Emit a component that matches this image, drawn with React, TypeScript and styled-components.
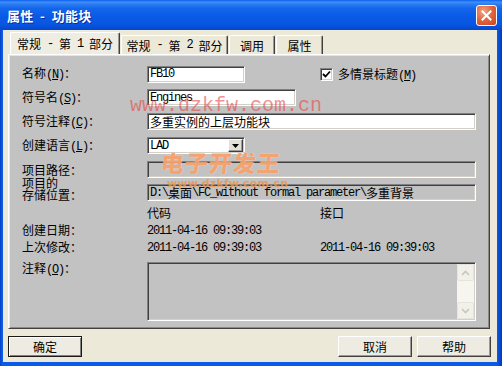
import React from "react";
import styled, { createGlobalStyle } from "styled-components";

const CJK = `"Noto Sans CJK SC", "Noto Sans", sans-serif`;
const MONO = `"Liberation Mono", "Noto Sans CJK SC", monospace`;
const PANEL = "#C2C2C2";
const FACE = "#ECE9D8";

const Global = createGlobalStyle`
  html, body { margin: 0; padding: 0; width: 502px; height: 366px; overflow: hidden; background: #0A55E0; }
  #root { width: 502px; height: 366px; }
  * { box-sizing: border-box; }
`;

const Window = styled.div`
  position: relative;
  width: 502px;
  height: 366px;
  display: flex;
  flex-direction: column;
  overflow: hidden;
  background: linear-gradient(to right, #0A3FC0 0, #0B5BE8 2px, #0B5BE8 497px, #0845CC 500px, #0838B0 502px);
  font-family: ${CJK};
  font-size: 12px;
  color: #000;
`;

const TitleBar = styled.div`
  flex: none;
  height: 30px;
  display: flex;
  align-items: center;
  padding: 0 5px 0 7px;
  background: linear-gradient(
    to bottom,
    #0B5FEE 0%,
    #3E8FF8 7%,
    #2C7CF2 14%,
    #1366EC 28%,
    #0A5AE6 55%,
    #0857E3 80%,
    #064ED6 92%,
    #0547C9 100%
  );
`;

const Title = styled.div`
  flex: 1;
  color: #fff;
  font-weight: 700;
  font-size: 13px;
  white-space: pre;
  letter-spacing: 0.3px;
  text-shadow: 1px 1px 0 #0A2F9A;
`;

const CloseBtn = styled.div`
  width: 21px;
  height: 21px;
  border: 1px solid #fff;
  border-radius: 3px;
  background: radial-gradient(circle at 35% 30%, #F3A68A 0%, #E2683F 45%, #C8421E 100%);
  display: flex;
  align-items: center;
  justify-content: center;
`;

const Client = styled.div`
  flex: 1;
  margin: 0 5px 4px 3px;
  background: ${FACE};
  display: flex;
  flex-direction: column;
`;

const TabStrip = styled.div`
  flex: none;
  height: 24px;
  display: flex;
  align-items: flex-end;
  padding-left: 7px;
`;

const Tab = styled.div<{ $w: number; $active?: boolean }>`
  width: ${(p) => p.$w}px;
  height: ${(p) => (p.$active ? 22 : 19)}px;
  margin-left: ${(p) => (p.$active ? 0 : 1)}px;
  display: flex;
  align-items: center;
  justify-content: center;
  white-space: pre;
  background: ${(p) => (p.$active ? "#EFEDE2" : FACE)};
  border-top: 1px solid #fff;
  border-left: 1px solid #fff;
  border-right: 1px solid #404040;
  box-shadow: inset -1px 0 0 #9A9A9A;
  border-radius: 2px 2px 0 0;
`;

const Panel = styled.div`
  flex: none;
  height: 275px;
  margin: 0 7px 0 5px;
  padding: 10px 12px 0 13px;
  background: ${PANEL};
  border: 1px solid;
  border-color: #fff #404040 #404040 #fff;
  box-shadow: inset 1px 1px 0 #E4E4E4, inset -1px -1px 0 #8A8A8A;
  display: flex;
  flex-direction: column;
`;

const Row = styled.div<{ $h: number; $mt: number; $align?: string }>`
  flex: none;
  display: grid;
  grid-template-columns: 125px 173px 156px;
  height: ${(p) => p.$h}px;
  margin-top: ${(p) => p.$mt}px;
  align-items: ${(p) => p.$align || "center"};
`;

const Label = styled.div`
  white-space: pre;
  line-height: 12px;
`;

const Field = styled.div<{ $w?: number; $span?: boolean; $disabled?: boolean }>`
  grid-column: ${(p) => (p.$span ? "2 / 4" : "2")};
  width: ${(p) => (p.$w ? `${p.$w}px` : "100%")};
  height: 17px;
  display: flex;
  align-items: center;
  padding: 0 1px 0 2px;
  overflow: hidden;
  white-space: pre;
  background: ${(p) => (p.$disabled ? PANEL : "#fff")};
  border: 1px solid;
  border-color: #808080 #fff #fff #808080;
  box-shadow: inset 1px 1px 0 #404040, inset -1px -1px 0 #D4D0C8;
`;

const Mono = styled.span`
  font-family: ${MONO};
  font-size: 12px;
  letter-spacing: -1.2px;
  white-space: pre;
`;

const DropBtn = styled.div`
  margin-left: auto;
  width: 15px;
  height: 13px;
  background: #E4E1D8;
  border: 1px solid;
  border-color: #fff #404040 #404040 #fff;
  box-shadow: inset -1px -1px 0 #9A9A9A;
  display: flex;
  align-items: center;
  justify-content: center;
`;

const Check = styled.label`
  grid-column: 3;
  display: flex;
  align-items: center;
  gap: 5px;
  white-space: pre;
`;

const CheckBox = styled.div`
  width: 13px;
  height: 13px;
  background: #fff;
  border: 1px solid;
  border-color: #808080 #fff #fff #808080;
  box-shadow: inset 1px 1px 0 #404040, inset -1px -1px 0 #D4D0C8;
  display: flex;
  align-items: center;
  justify-content: center;
`;

const Value = styled.div<{ $col: number }>`
  grid-column: ${(p) => p.$col};
  white-space: pre;
  line-height: 12px;
`;

const TextArea = styled.div`
  grid-column: 2 / 4;
  height: 59px;
  display: flex;
  justify-content: flex-end;
  padding: 1px;
  background: ${PANEL};
  border: 1px solid;
  border-color: #808080 #fff #fff #808080;
  box-shadow: inset 1px 1px 0 #404040, inset -1px -1px 0 #D4D0C8;
`;

const ScrollBar = styled.div`
  width: 17px;
  height: 100%;
  display: flex;
  flex-direction: column;
  background: #F6F5F0;
`;

const ScrollBtn = styled.div`
  width: 17px;
  height: 17px;
  background: #F1F0EA;
  border: 1px solid #E6E4DA;
  border-radius: 2px;
  display: flex;
  align-items: center;
  justify-content: center;
`;

const Track = styled.div`
  flex: 1;
`;

const ButtonBar = styled.div`
  flex: none;
  height: 21px;
  margin-top: 7px;
  padding: 0 6px 0 5px;
  display: flex;
  gap: 5px;
`;

const Button = styled.div<{ $default?: boolean }>`
  width: 74px;
  height: 21px;
  display: flex;
  align-items: center;
  justify-content: center;
  background: #EEECE2;
  border: 1px solid;
  border-color: ${(p) => (p.$default ? "#1A1A1A" : "#fff #404040 #404040 #fff")};
  box-shadow: ${(p) =>
    p.$default
      ? "inset 1px 1px 0 #fff, inset -1px -1px 0 #808080"
      : "inset -1px -1px 0 #9A9A9A"};
`;

const Spacer = styled.div`
  flex: 1;
`;

const WmUrl = styled.div`
  position: absolute;
  left: 130px;
  top: 96px;
  font-family: "Liberation Mono", monospace;
  font-size: 20px;
  line-height: 20px;
  color: rgba(232, 70, 70, 0.6);
  white-space: pre;
  pointer-events: none;
`;

const WmLogo = styled.div`
  position: absolute;
  left: 161px;
  top: 148px;
  font-family: ${CJK};
  font-weight: 900;
  font-size: 23px;
  line-height: 28px;
  letter-spacing: 1px;
  color: rgba(242, 142, 78, 0.8);
  transform: skewX(-6deg);
  text-shadow: 0 0 1px rgba(255, 255, 255, 0.8);
  white-space: pre;
  pointer-events: none;
`;

const WmSmall = styled.div`
  position: absolute;
  left: 167px;
  top: 178px;
  font-family: "DejaVu Sans", sans-serif;
  font-weight: 700;
  font-size: 11px;
  line-height: 12px;
  letter-spacing: 0.2px;
  color: rgba(236, 150, 80, 0.85);
  white-space: pre;
  pointer-events: none;
`;

const Chevron = ({ up }: { up?: boolean }) => (
  <svg width="9" height="6" viewBox="0 0 9 6">
    <path
      d={up ? "M1 5 L4.5 1.5 L8 5" : "M1 1 L4.5 4.5 L8 1"}
      fill="none"
      stroke="#C9C6B8"
      strokeWidth="1.6"
    />
  </svg>
);

const Key = ({ k }: { k: string }) => (
  <Mono>
    (<u>{k}</u>)
  </Mono>
);

export default function App() {
  return (
    <>
      <Global />
      <Window>
        <TitleBar>
          <Title>{"属性  -  功能块"}</Title>
          <CloseBtn>
            <svg width="11" height="11" viewBox="0 0 11 11">
              <path d="M1.5 1.5 L9.5 9.5 M9.5 1.5 L1.5 9.5" stroke="#fff" strokeWidth="2" strokeLinecap="square" />
            </svg>
          </CloseBtn>
        </TitleBar>
        <Client>
          <TabStrip>
            <Tab $w={110} $active>
              常规<Mono>{" - "}</Mono>第<Mono>{" 1 "}</Mono>部分
            </Tab>
            <Tab $w={107}>
              常规<Mono>{" - "}</Mono>第<Mono>{" 2 "}</Mono>部分
            </Tab>
            <Tab $w={46}>调用</Tab>
            <Tab $w={47}>属性</Tab>
          </TabStrip>
          <Panel>
            <Row $h={17} $mt={0}>
              <Label>
                名称<Key k="N" />：
              </Label>
              <Field $w={98}>
                <Mono>FB10</Mono>
              </Field>
              <Check>
                <CheckBox>
                  <svg width="9" height="9" viewBox="0 0 9 9">
                    <path d="M1 4 L3.5 6.5 L8 1.5" fill="none" stroke="#000" strokeWidth="1.8" />
                  </svg>
                </CheckBox>
                <span>
                  多情景标题<Key k="M" />
                </span>
              </Check>
            </Row>
            <Row $h={17} $mt={7}>
              <Label>
                符号名<Key k="S" />：
              </Label>
              <Field $w={149}>
                <Mono>Engines</Mono>
              </Field>
            </Row>
            <Row $h={17} $mt={7}>
              <Label>
                符号注释<Key k="C" />：
              </Label>
              <Field $span>多重实例的上层功能块</Field>
            </Row>
            <Row $h={17} $mt={7}>
              <Label>
                创建语言<Key k="L" />：
              </Label>
              <Field $w={98}>
                <Mono>LAD</Mono>
                <DropBtn>
                  <svg width="7" height="4" viewBox="0 0 7 4">
                    <path d="M0 0 H7 L3.5 4 Z" fill="#000" />
                  </svg>
                </DropBtn>
              </Field>
            </Row>
            <Row $h={17} $mt={7}>
              <Label>项目路径：</Label>
              <Field $span $disabled />
            </Row>
            <Row $h={24} $mt={-1} $align="end">
              <Label>{"项目的\n存储位置："}</Label>
              <Field $span $disabled>
                <Mono>{"D:\\"}</Mono>
                桌面
                <Mono>{"\\FC_without formal parameter\\"}</Mono>
                多重背景
              </Field>
            </Row>
            <Row $h={14} $mt={5}>
              <Label />
              <Value $col={2}>代码</Value>
              <Value $col={3}>接口</Value>
            </Row>
            <Row $h={14} $mt={3}>
              <Label>创建日期：</Label>
              <Value $col={2}>
                <Mono>2011-04-16 09:39:03</Mono>
              </Value>
            </Row>
            <Row $h={14} $mt={3}>
              <Label>上次修改：</Label>
              <Value $col={2}>
                <Mono>2011-04-16 09:39:03</Mono>
              </Value>
              <Value $col={3}>
                <Mono>2011-04-16 09:39:03</Mono>
              </Value>
            </Row>
            <Row $h={59} $mt={8} $align="start">
              <Label>
                注释<Key k="O" />：
              </Label>
              <TextArea>
                <ScrollBar>
                  <ScrollBtn>
                    <Chevron up />
                  </ScrollBtn>
                  <Track />
                  <ScrollBtn>
                    <Chevron />
                  </ScrollBtn>
                </ScrollBar>
              </TextArea>
            </Row>
          </Panel>
          <ButtonBar>
            <Button $default>确定</Button>
            <Spacer />
            <Button>取消</Button>
            <Button>帮助</Button>
          </ButtonBar>
        </Client>
        <WmUrl>www.dzkfw.com.cn</WmUrl>
        <WmLogo>电子开发王</WmLogo>
        <WmSmall>www.dzkfw.com.cn</WmSmall>
      </Window>
    </>
  );
}
